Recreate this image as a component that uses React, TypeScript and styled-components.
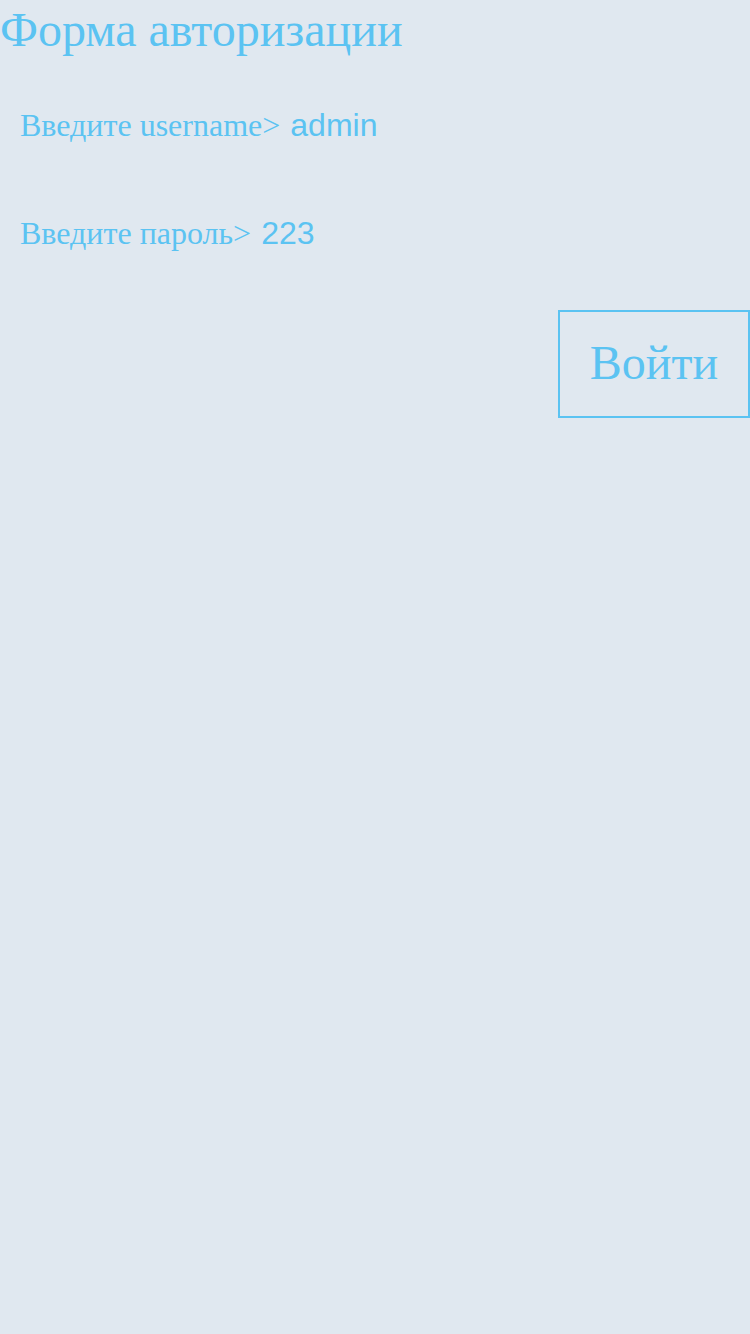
import React from "react";
import styled, { createGlobalStyle } from "styled-components";

const Global = createGlobalStyle`
  html, body { margin: 0; padding: 0; background: #e0e8f0; }
  body { font-family: "Liberation Serif", serif; color: #5bc3f2; }
`;

const Page = styled.div`
  width: 750px;
  min-height: 1334px;
  background: #e0e8f0;
  display: flex;
  flex-direction: column;
`;

const Title = styled.h1`
  margin: 0;
  font-family: "Liberation Serif", serif;
  font-weight: normal;
  font-size: 48px;
  line-height: 60px;
  color: #5bc3f2;
`;

const Form = styled.form`
  display: flex;
  flex-direction: column;
  padding: 41px 20px 0 20px;
  gap: 60px;
`;

const Row = styled.label`
  display: flex;
  align-items: baseline;
  gap: 10px;
  font-family: "Liberation Serif", serif;
  font-size: 32px;
  line-height: 48px;
  color: #5bc3f2;
`;

const Input = styled.input`
  flex: 1;
  border: none;
  background: transparent;
  outline: none;
  padding: 0;
  font-family: "Liberation Sans", sans-serif;
  font-size: 32px;
  color: #5bc3f2;
`;

const Actions = styled.div`
  display: flex;
  justify-content: flex-end;
  margin-top: 53px;
`;

const Button = styled.button`
  width: 192px;
  height: 108px;
  border: 2px solid #5bc3f2;
  background: transparent;
  font-family: "Liberation Serif", serif;
  font-size: 48px;
  color: #5bc3f2;
  padding: 0 0 4px 0;
`;

export default function App() {
  return (
    <Page>
      <Global />
      <Title>Форма авторизации</Title>
      <Form onSubmit={(e) => e.preventDefault()}>
        <Row>
          Введите username&gt;
          <Input defaultValue="admin" />
        </Row>
        <Row>
          Введите пароль&gt;
          <Input defaultValue="223" />
        </Row>
      </Form>
      <Actions>
        <Button type="submit">Войти</Button>
      </Actions>
    </Page>
  );
}
